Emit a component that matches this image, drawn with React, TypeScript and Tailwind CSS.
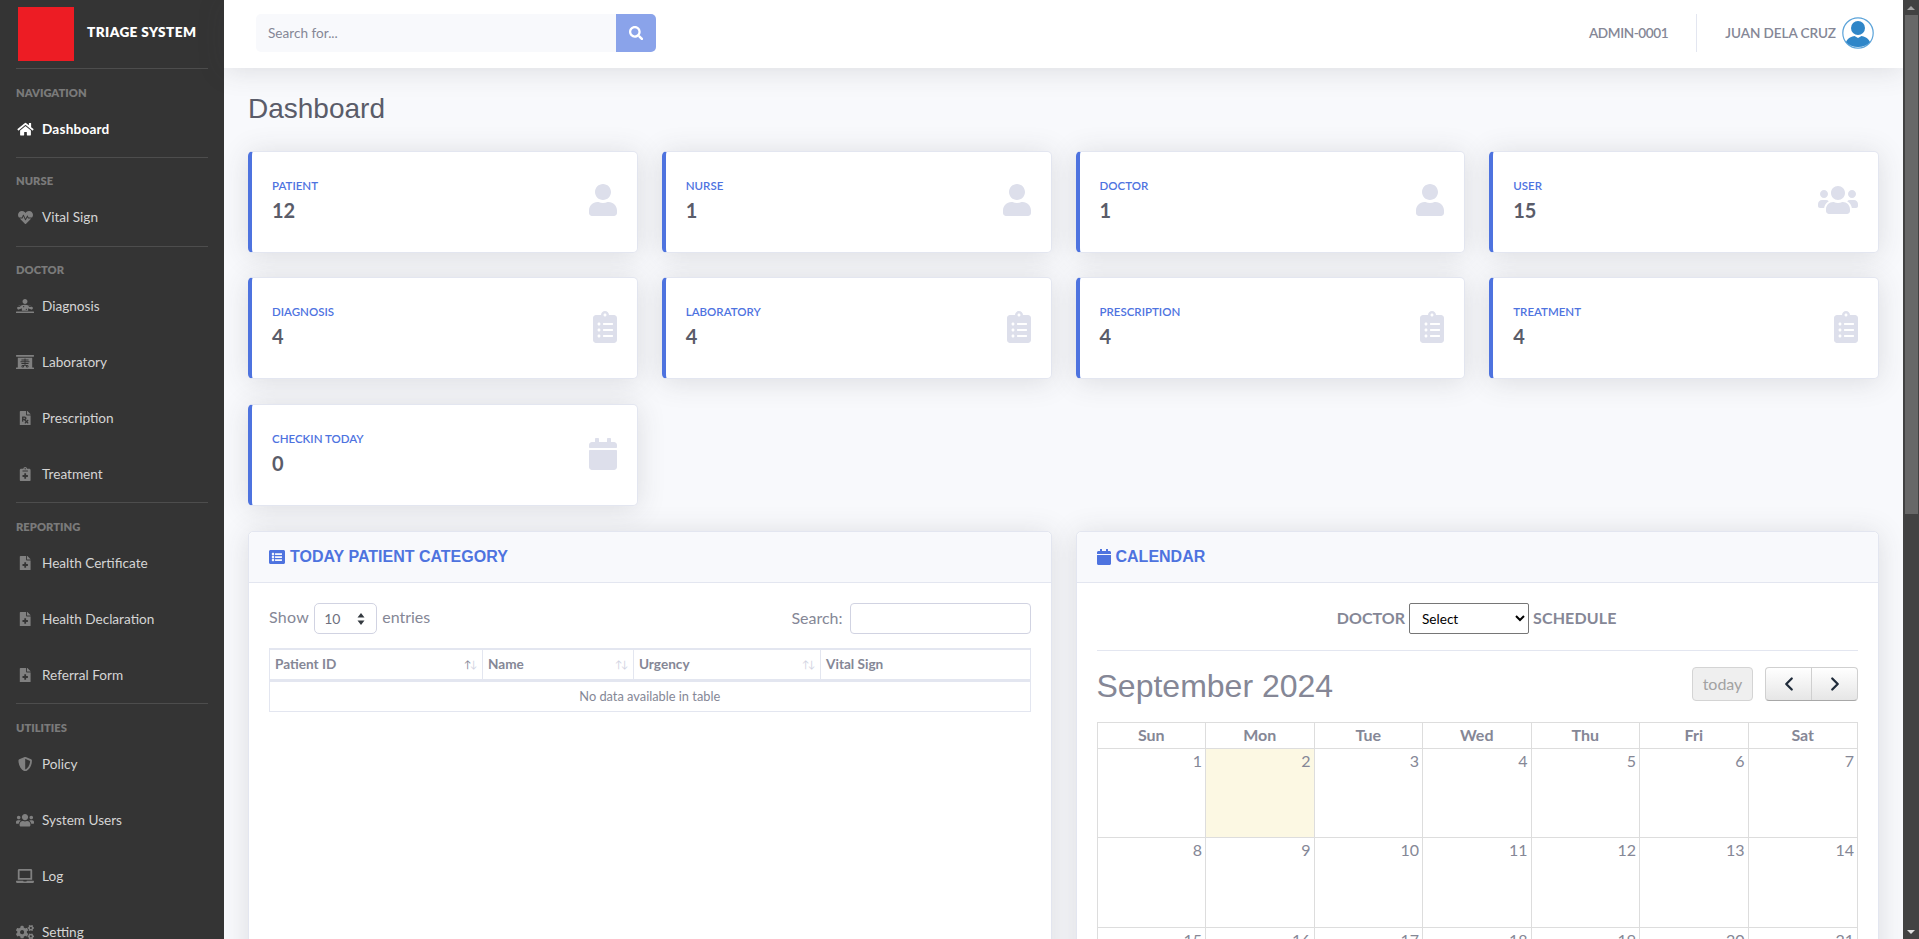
import {
  FaCalendar,
  FaClipboardList,
  FaCogs,
  FaDiagnoses,
  FaFileMedical,
  FaFilePrescription,
  FaHeartbeat,
  FaHome,
  FaLaptop,
  FaListAlt,
  FaNotesMedical,
  FaSearch,
  FaShieldAlt,
  FaUser,
  FaUsers,
  FaXRay,
} from "react-icons/fa";
import { ChevronLeft, ChevronRight } from "lucide-react";

const wide = "h-[14.4px] w-[18px]";
const square = "size-[14.4px]";

const nav = [
  { title: "NAVIGATION", items: [{ label: "Dashboard", icon: FaHome, size: "h-[14.4px] w-[17px]", active: true }] },
  { title: "NURSE", items: [{ label: "Vital Sign", icon: FaHeartbeat, size: "size-[15px]" }] },
  {
    title: "DOCTOR",
    items: [
      { label: "Diagnosis", icon: FaDiagnoses, size: wide },
      { label: "Laboratory", icon: FaXRay, size: wide },
      { label: "Prescription", icon: FaFilePrescription, size: square },
      { label: "Treatment", icon: FaNotesMedical, size: square },
    ],
  },
  {
    title: "REPORTING",
    items: [
      { label: "Health Certificate", icon: FaFileMedical, size: square },
      { label: "Health Declaration", icon: FaFileMedical, size: square },
      { label: "Referral Form", icon: FaFileMedical, size: square },
    ],
  },
  {
    title: "UTILITIES",
    items: [
      { label: "Policy", icon: FaShieldAlt, size: square },
      { label: "System Users", icon: FaUsers, size: wide },
      { label: "Log", icon: FaLaptop, size: wide },
      { label: "Setting", icon: FaCogs, size: wide },
    ],
  },
];

const stats = [
  { label: "PATIENT", value: 12, icon: FaUser, size: "w-[28px]" },
  { label: "NURSE", value: 1, icon: FaUser, size: "w-[28px]" },
  { label: "DOCTOR", value: 1, icon: FaUser, size: "w-[28px]" },
  { label: "USER", value: 15, icon: FaUsers, size: "w-[40px]" },
  { label: "DIAGNOSIS", value: 4, icon: FaClipboardList, size: "w-[24px]" },
  { label: "LABORATORY", value: 4, icon: FaClipboardList, size: "w-[24px]" },
  { label: "PRESCRIPTION", value: 4, icon: FaClipboardList, size: "w-[24px]" },
  { label: "TREATMENT", value: 4, icon: FaClipboardList, size: "w-[24px]" },
  { label: "CHECKIN TODAY", value: 0, icon: FaCalendar, size: "w-[28px]" },
];

const days = ["Sun", "Mon", "Tue", "Wed", "Thu", "Fri", "Sat"];
const weeks = [
  [1, 2, 3, 4, 5, 6, 7],
  [8, 9, 10, 11, 12, 13, 14],
  [15, 16, 17, 18, 19, 20, 21],
];

function Sidebar() {
  return (
    <aside className="w-[224px] shrink-0 bg-[#343434] px-4 font-['Lato',sans-serif]">
      <div className="flex h-[68px] items-start pl-0.5 pt-[7px]">
        <div className="h-[54px] w-[56px] bg-[#ed1c24]" />
        <span className="ml-[13px] mt-[15px] text-[13.6px] font-extrabold tracking-[0.4px] text-white">TRIAGE SYSTEM</span>
      </div>
      {nav.map((section) => (
        <div key={section.title} className="border-t border-[#4d4d4d]">
          <div className="pt-[16.5px] text-[11.2px] font-extrabold leading-[14px] text-[#7a7a7a]">{section.title}</div>
          <ul className="mt-[1.25px]">
            {section.items.map((item) => (
              <li
                key={item.label}
                className={`flex h-[56px] items-center ${item.active ? "font-bold tracking-[0.2px] text-white" : "text-[#d5d5d5]"}`}
              >
                <span className="flex w-[18px] justify-center">
                  <item.icon className={`${item.size} ${item.active ? "text-white" : "text-[#808080]"}`} />
                </span>
                <span className="ml-[8px] text-[13.6px]">{item.label}</span>
              </li>
            ))}
          </ul>
        </div>
      ))}
    </aside>
  );
}

function Topbar() {
  return (
    <header className="flex h-[68px] shrink-0 items-center justify-between bg-white pb-[2px] pl-[32px] pr-[29px] shadow-[0_2.4px_28px_0_rgba(58,59,69,0.15)]">
      <div className="flex h-[38px] w-[400px]">
        <input
          placeholder="Search for..."
          className="h-full flex-1 rounded-l-[5px] bg-[#f8f9fc] px-3 text-[13.6px] placeholder:text-[#858796] outline-none"
        />
        <button className="flex w-[40px] items-center justify-center rounded-r-[5px] bg-[#8aa3ea] text-white">
          <FaSearch className="text-[14.4px]" />
        </button>
      </div>
      <div className="flex items-center text-[13.6px] font-semibold text-[#858796]">
        <span className="tracking-[-0.4px]">ADMIN-0001</span>
        <div className="mx-[28px] h-[38px] w-px bg-[#e3e6f0]" />
        <span className="tracking-[-0.1px]">JUAN DELA CRUZ</span>
        <svg viewBox="0 0 32 32" className="ml-[6px] size-[32px]">
          <circle cx="16" cy="16" r="15.2" fill="#fff" stroke="#5ba3d9" strokeWidth="1.2" />
          <circle cx="16" cy="11" r="7" fill="#2f86c8" />
          <path d="M4 25 C6 20.5 10 19.5 12.5 19 L16 21 L19.5 19 C22 19.5 26 20.5 28 25 C25 28.5 21 30 16 30 C11 30 7 28.5 4 25Z" fill="#2f86c8" />
        </svg>
      </div>
    </header>
  );
}

function StatCard({ label, value, icon: Icon, size }: (typeof stats)[number]) {
  return (
    <div className="flex h-[102px] items-center justify-between rounded-[5px] border border-l-4 border-[#e3e6f0] border-l-[#4e73df] bg-white pb-[3px] pl-[20px] pr-[20px] shadow-[0_2.4px_28px_0_rgba(58,59,69,0.15)]">
      <div>
        <div className="text-[11.5px] font-semibold leading-[14px] text-[#4e73df]">{label}</div>
        <div className="mt-[5px] text-[20px] font-bold leading-[24px] text-[#5a5c69]">{value}</div>
      </div>
      <Icon className={`h-[32px] ${size} text-[#dddfeb]`} />
    </div>
  );
}

function PanelHeader({ icon: Icon, title, size }: { icon: typeof FaCalendar; title: string; size: string }) {
  return (
    <div className="flex h-[51px] items-center gap-[5px] rounded-t-[5px] border-b border-[#e3e6f0] bg-[#f8f9fc] px-[20px] font-['Liberation_Sans',sans-serif] text-[16px] font-bold text-[#4e73df]">
      <Icon className={`h-[16px] ${size}`} />
      <span>{title}</span>
    </div>
  );
}

function PatientPanel() {
  const heads = [
    { label: "Patient ID", w: "w-[213px]", up: "text-[#858796]", down: "text-[#d1d3e2]" },
    { label: "Name", w: "w-[151px]", up: "text-[#d1d3e2]", down: "text-[#d1d3e2]" },
    { label: "Urgency", w: "w-[187px]", up: "text-[#d1d3e2]", down: "text-[#d1d3e2]" },
    { label: "Vital Sign", w: "flex-1" },
  ];
  return (
    <section className="h-[700px] rounded-[5px] border border-[#e3e6f0] bg-white shadow-[0_2.4px_28px_0_rgba(58,59,69,0.15)]">
      <PanelHeader icon={FaListAlt} size="w-[16px]" title="TODAY PATIENT CATEGORY" />
      <div className="px-[20px] pt-[20px] text-[#858796]">
        <div className="flex h-[31px] items-center justify-between text-[16px]">
          <div className="flex items-center gap-[5px]">
            <span className="pb-[3px] tracking-[0.3px]">Show</span>
            <div className="relative">
              <select className="h-[31px] w-[63px] appearance-none rounded-[5px] border border-[#d1d3e2] bg-white pl-[9px] text-[14px] text-[#6e707e]">
                <option>10</option>
              </select>
              <svg viewBox="0 0 8 14" className="absolute right-[12px] top-[9px] h-[14px] w-[8px]">
                <path d="M4 1 L7.5 5.5 H0.5Z M4 13 L0.5 8.5 H7.5Z" fill="#343a40" />
              </svg>
            </div>
            <span className="pb-[3px]">entries</span>
          </div>
          <div className="flex items-center gap-[7px]">
            <span className="pb-[2px]">Search:</span>
            <input className="h-[31px] w-[181px] rounded-[4px] border border-[#d1d3e2] bg-white" />
          </div>
        </div>
        <div className="mt-[14px] border border-t-2 border-[#e3e6f0] text-[13.6px]">
          <div className="flex h-[32px] border-b-[3px] border-[#e3e6f0]">
            {heads.map((h, i) => (
              <div
                key={h.label}
                className={`flex items-center justify-between border-[#e3e6f0] pl-[5px] pr-[6px] font-bold ${h.w} ${i < 3 ? "border-r" : ""}`}
              >
                <span>{h.label}</span>
                {h.up && (
                  <span className="text-[10px] font-normal tracking-[-1.5px]">
                    <span className={h.up}>↑</span>
                    <span className={h.down}>↓</span>
                  </span>
                )}
              </div>
            ))}
          </div>
          <div className="flex h-[29px] items-center justify-center text-[12.8px]">No data available in table</div>
        </div>
      </div>
    </section>
  );
}

function CalendarPanel() {
  return (
    <section className="h-[700px] rounded-[5px] border border-[#e3e6f0] bg-white shadow-[0_2.4px_28px_0_rgba(58,59,69,0.15)]">
      <PanelHeader icon={FaCalendar} size="w-[14px]" title="CALENDAR" />
      <div className="px-[20px] pt-[20px] text-[#858796]">
        <div className="flex h-[31px] items-center justify-center gap-[4px] pr-[1px] text-[16px] font-bold">
          <span className="pb-[2px]">DOCTOR</span>
          <select className="h-[31px] w-[120px] rounded-[2px] border border-[#767676] bg-white pl-[8px] text-[13.6px] font-normal text-black">
            <option>Select</option>
          </select>
          <span className="pb-[2px] tracking-[0.15px]">SCHEDULE</span>
        </div>
        <div className="mt-[16px] border-t border-[#e3e6f0]" />
        <div className="mt-[16px] flex h-[36px] items-start justify-between">
          <div className="mt-[1px] font-['Liberation_Sans',sans-serif] text-[32px] leading-[36px]">September 2024</div>
          <div className="flex items-center">
            <button className="h-[34px] w-[61px] rounded-[4px] border border-[#d4d4d4] bg-[#efefef] text-[16px] text-[#a2a2a2]">today</button>
            <div className="ml-[12px] flex h-[34px] w-[93px] rounded-[4px] border border-[#d0d0d0] border-b-[#a8a8a8] bg-linear-to-b from-white to-[#e6e6e6] text-[#1f2b3a]">
              <span className="flex flex-1 items-center justify-center border-r border-[#cfcfcf]"><ChevronLeft size={22} strokeWidth={2.5} /></span>
              <span className="flex flex-1 items-center justify-center"><ChevronRight size={22} strokeWidth={2.5} /></span>
            </div>
          </div>
        </div>
        <div className="mt-[19px] border border-[#ddd]">
          <div className="grid h-[26px] grid-cols-7 border-b border-[#ddd] text-[16px] font-bold">
            {days.map((d, i) => (
              <div key={d} className={`flex items-center justify-center border-[#ddd] pb-[2px] ${i < 6 ? "border-r" : ""}`}>{d}</div>
            ))}
          </div>
          {weeks.map((w) => (
            <div key={w[0]} className="grid h-[89.3px] grid-cols-7 border-b border-[#ddd]">
              {w.map((n, i) => (
                <div
                  key={n}
                  className={`border-[#ddd] pr-[3px] text-right text-[16px] leading-[23px] ${i < 6 ? "border-r" : ""} ${n === 2 ? "bg-[#fcf8e3]" : ""}`}
                >
                  {n}
                </div>
              ))}
            </div>
          ))}
        </div>
      </div>
    </section>
  );
}

function Scrollbar() {
  return (
    <div className="flex w-[16px] shrink-0 flex-col bg-[#424242]">
      <div className="flex h-[15px] items-center justify-center">
        <div className="size-0 border-x-[4px] border-b-[4px] border-x-transparent border-b-[#a3a3a3]" />
      </div>
      <div className="ml-[2px] mr-px h-[499px] bg-[#686868]" />
      <div className="flex-1" />
      <div className="flex h-[15px] items-center justify-center">
        <div className="size-0 border-x-[4px] border-t-[4px] border-x-transparent border-t-[#e0e0e0]" />
      </div>
    </div>
  );
}

export default function App() {
  return (
    <div className="flex h-screen overflow-hidden bg-[#f8f9fc] font-['Lato',sans-serif]">
      <Sidebar />
      <main className="flex min-w-0 flex-1 flex-col">
        <Topbar />
        <div className="flex-1 overflow-hidden px-[24px]">
          <h1 className="mt-[23px] font-['Liberation_Sans',sans-serif] text-[28px] leading-[36px] text-[#5a5c69]">Dashboard</h1>
          <div className="mt-[23.5px] grid grid-cols-4 gap-x-[24px] gap-y-[24.75px]">
            {stats.map((s) => (
              <StatCard key={s.label} {...s} />
            ))}
          </div>
          <div className="mt-[25px] grid grid-cols-2 gap-x-[24px]">
            <PatientPanel />
            <CalendarPanel />
          </div>
        </div>
      </main>
      <Scrollbar />
    </div>
  );
}
